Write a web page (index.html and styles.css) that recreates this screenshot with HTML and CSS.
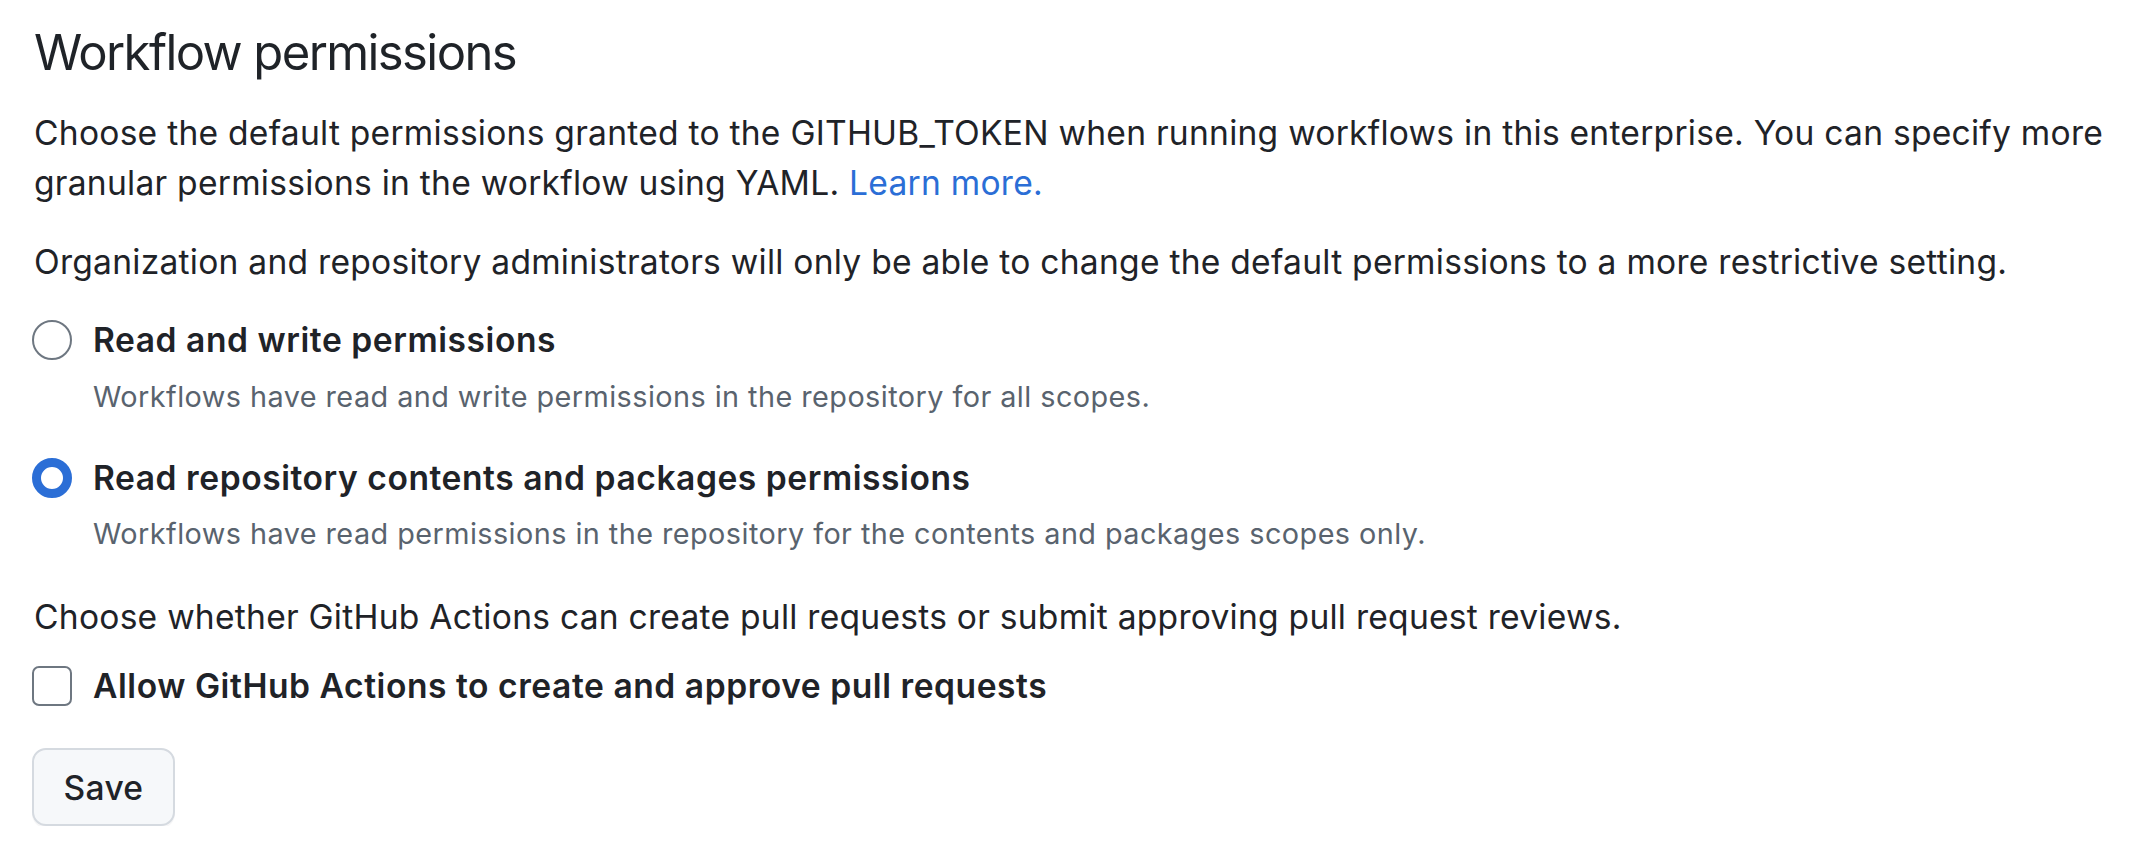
FILE: index.html
```html
<!DOCTYPE html>
<html lang="en">
<head>
<meta charset="utf-8">
<title>Workflow permissions</title>
<link rel="stylesheet" href="styles.css">
</head>
<body>
<div class="page">
  <h2 class="subhead">Workflow permissions</h2>
  <p class="lead">Choose the default permissions granted to the GITHUB_TOKEN when running workflows in this enterprise. You can specify more granular permissions in the workflow using YAML. <a class="link" href="#">Learn more.</a></p>
  <p class="note-top">Organization and repository administrators will only be able to change the default permissions to a more restrictive setting.</p>

  <div class="option first">
    <div class="option-row">
      <span class="radio"></span>
      <span class="label">Read and write permissions</span>
    </div>
    <div class="desc">Workflows have read and write permissions in the repository for all scopes.</div>
  </div>

  <div class="option second">
    <div class="option-row">
      <span class="radio checked"></span>
      <span class="label">Read repository contents and packages permissions</span>
    </div>
    <div class="desc">Workflows have read permissions in the repository for the contents and packages scopes only.</div>
  </div>

  <p class="choose">Choose whether GitHub Actions can create pull requests or submit approving pull request reviews.</p>

  <div class="option-row check-row">
    <span class="checkbox"></span>
    <span class="label">Allow GitHub Actions to create and approve pull requests</span>
  </div>

  <button class="btn" type="button">Save</button>
</div>
</body>
</html>
```

FILE: styles.css
```css
html, body {
  margin: 0;
  padding: 0;
  background: #ffffff;
}

body {
  font-family: Inter, "Noto Sans", "Liberation Sans", sans-serif;
  color: #1f2328;
  font-size: 33.6px;
  line-height: 50.4px;
  letter-spacing: 0.25px;
}

.page {
  padding: 20px 0 0 34px;
  width: 2080px;
}

.subhead {
  margin: 0;
  font-size: 49px;
  line-height: 65px;
  font-weight: 400;
  letter-spacing: -1.6px;
}

.lead {
  margin: 23px 0 0;
}

.link {
  color: #2b6ed6;
  text-decoration: none;
}

.note-top {
  margin: 28px 0 0;
}

.option {
  margin-left: -2px;
}

.option.first {
  margin-top: 28px;
}

.option.second {
  margin-top: 35px;
}

.option-row {
  display: flex;
  align-items: center;
  gap: 21px;
}

.label {
  font-weight: 600;
  letter-spacing: 0.55px;
}

.radio {
  width: 40px;
  height: 40px;
  box-sizing: border-box;
  border-radius: 50%;
  border: 2.4px solid #6e7781;
  flex: none;
}

.radio.checked {
  border: 9.6px solid #2b6ed6;
}

.desc {
  margin: 9px 0 0 61px;
  font-size: 28.8px;
  line-height: 43.2px;
  color: #59636e;
  letter-spacing: 0.45px;
}

.choose {
  margin: 37px 0 0;
}

.check-row {
  margin: 18px 0 0 -2px;
}

.checkbox {
  width: 40px;
  height: 40px;
  box-sizing: border-box;
  border-radius: 7px;
  border: 2.4px solid #6e7781;
  flex: none;
}

.btn {
  display: block;
  margin: 37px 0 0 -2px;
  height: 78px;
  width: 143px;
  padding: 0;
  font-family: inherit;
  font-size: 33.6px;
  font-weight: 500;
  letter-spacing: 0.3px;
  color: #1f2328;
  background: #f6f8fa;
  border: 2px solid #d5dae0;
  border-radius: 14px;
  box-shadow: 0 2px 0 rgba(31, 35, 40, 0.04);
}
```
